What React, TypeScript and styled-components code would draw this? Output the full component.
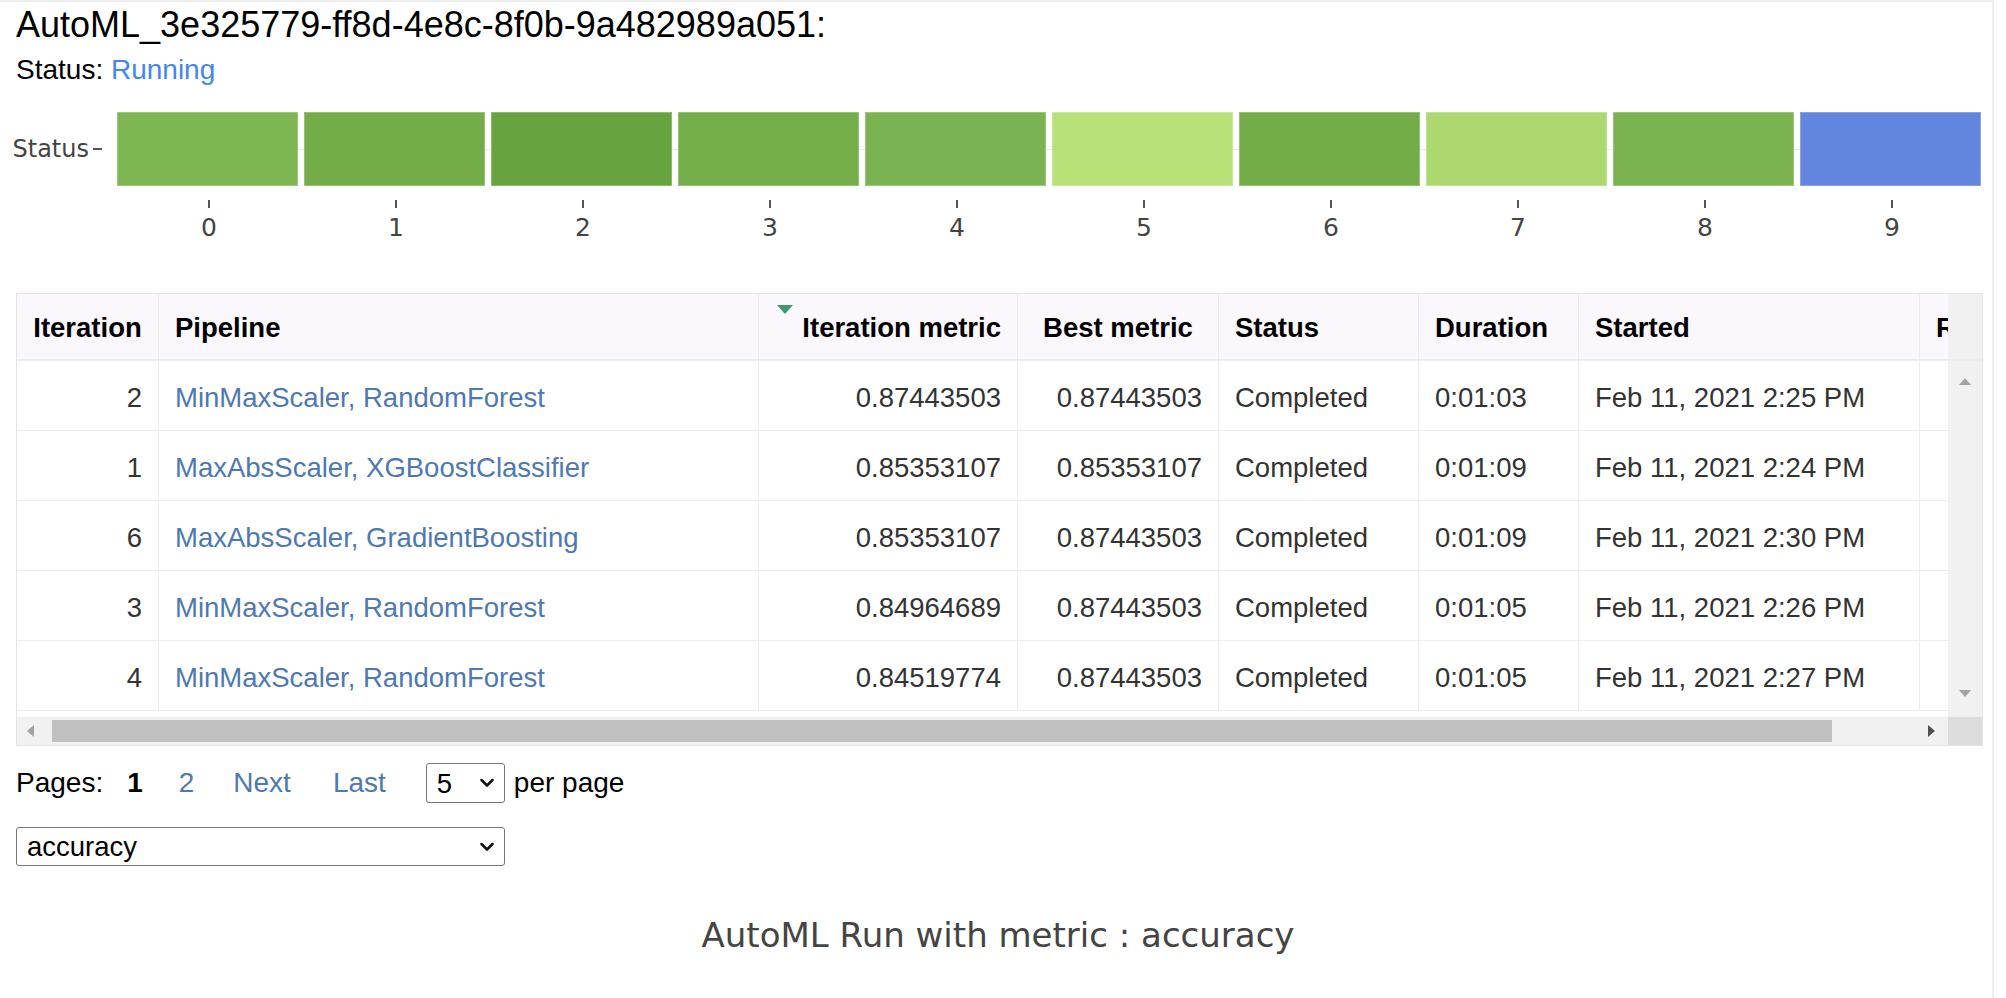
import React from "react";
import styled, { createGlobalStyle } from "styled-components";

const GlobalStyle = createGlobalStyle`
  html, body { margin: 0; padding: 0; background: #fff; }
  body { font-family: "Liberation Sans", Arial, sans-serif; color: #000; }
  * { box-sizing: border-box; }
`;

const COLS = "142px 600px 259px 201px 200px 160px 341px 220px";

const Frame = styled.div`
  width: 1994px;
  height: 998px;
  border-top: 2px solid #ededed;
  border-right: 2px solid #ededed;
  padding: 3px 0 0 16px;
  overflow: hidden;
`;

const Title = styled.div`
  font-size: 36px;
  line-height: 40px;
  height: 40px;
  white-space: nowrap;
`;

const StatusLine = styled.div`
  margin-top: 9px;
  font-size: 28px;
  line-height: 32px;
`;

const Running = styled.span`
  color: #4285f4;
`;

const Chart = styled.div`
  margin-top: 26px;
  display: grid;
  grid-template-columns: 101px 1864px;
  grid-template-rows: 74px auto;
  font-family: "DejaVu Sans", Verdana, sans-serif;
  color: #444;
`;

const YAxis = styled.div`
  display: flex;
  align-items: center;
  justify-content: flex-end;
  gap: 4px;
  padding-right: 15px;
  font-size: 24px;
  white-space: nowrap;
`;

const YTick = styled.span`
  flex-shrink: 0;
  width: 9px;
  height: 2px;
  background: #555;
`;

const Bars = styled.div`
  display: flex;
  gap: 6px;
  background: linear-gradient(#ebebeb, #ebebeb) 0 37px / 100% 1px no-repeat;
`;

const Bar = styled.div<{ $color: string }>`
  flex: 1;
  background: ${(p) => p.$color};
  box-shadow: inset 0 0 0 1px rgba(255, 255, 255, 0.25);
`;

const XAxis = styled.div`
  grid-column: 2;
  display: grid;
  grid-template-columns: repeat(10, 1fr);
  column-gap: 6px;
`;

const XTick = styled.div`
  display: flex;
  flex-direction: column;
  align-items: center;
  padding-left: 3px;
`;

const TickMark = styled.span`
  width: 2px;
  height: 8px;
  margin-top: 14px;
  background: #555;
`;

const TickLabel = styled.span`
  margin-top: 5px;
  font-size: 25px;
  line-height: 30px;
`;

const TableFrame = styled.div`
  margin-top: 50px;
  width: 1967px;
  border: 1px solid #e4e4e4;
  display: grid;
  grid-template-columns: 1931px 34px;
  grid-template-rows: 67px 356px 28px;
`;

const Viewport = styled.div`
  overflow: hidden;
`;

const HeaderRow = styled.div`
  display: grid;
  grid-template-columns: ${COLS};
  width: max-content;
  height: 67px;
  background: #faf8fc;
  border-bottom: 2px solid #ececec;
`;

const HeaderGutter = styled.div`
  background: #f1f1f1;
  border-bottom: 2px solid #ececec;
`;

type Align = "start" | "center" | "end";

const justify = (a: Align) => (a === "start" ? "flex-start" : a === "end" ? "flex-end" : "center");

const HeadCell = styled.div<{ $align: Align }>`
  display: flex;
  align-items: center;
  justify-content: ${(p) => justify(p.$align)};
  gap: 9px;
  padding: 3px 16px 0;
  border-right: 1px solid #ececec;
  font-size: 27.5px;
  font-weight: 700;
  white-space: nowrap;
  overflow: hidden;
`;

const SortMark = styled.span`
  align-self: flex-start;
  margin-top: 8px;
  width: 0;
  height: 0;
  border-left: 8px solid transparent;
  border-right: 8px solid transparent;
  border-top: 9px solid #3f9a6b;
`;

const Row = styled.div`
  display: grid;
  grid-template-columns: ${COLS};
  width: max-content;
  height: 70px;
  border-bottom: 1px solid #ececec;
`;

const Cell = styled.div<{ $align: Align; $link?: boolean }>`
  display: flex;
  align-items: center;
  justify-content: ${(p) => justify(p.$align)};
  padding: 4px 16px 0;
  border-right: 1px solid #ececec;
  font-size: 27.5px;
  color: ${(p) => (p.$link ? "#4d79b2" : "#333")};
  white-space: nowrap;
  overflow: hidden;
`;

const VScroll = styled.div`
  background: #f1f1f1;
  display: flex;
  flex-direction: column;
  justify-content: space-between;
  align-items: center;
  padding: 17px 0 20px;
`;

const ArrowUp = styled.span`
  width: 0;
  height: 0;
  border-left: 6px solid transparent;
  border-right: 6px solid transparent;
  border-bottom: 7px solid #a3a3a3;
`;

const ArrowDown = styled.span`
  width: 0;
  height: 0;
  border-left: 6px solid transparent;
  border-right: 6px solid transparent;
  border-top: 7px solid #a3a3a3;
`;

const HScroll = styled.div`
  background: #f1f1f1;
  display: flex;
  align-items: center;
  padding: 0 13px 0 10px;
`;

const ArrowLeft = styled.span`
  width: 0;
  height: 0;
  border-top: 6px solid transparent;
  border-bottom: 6px solid transparent;
  border-right: 7px solid #a3a3a3;
`;

const ArrowRight = styled.span`
  margin-left: auto;
  width: 0;
  height: 0;
  border-top: 6px solid transparent;
  border-bottom: 6px solid transparent;
  border-left: 7px solid #505050;
`;

const Thumb = styled.span`
  margin-left: 18px;
  height: 22px;
  background: #c1c1c1;
`;

const Corner = styled.div`
  background: #dcdcdc;
`;

const Pager = styled.div`
  margin-top: 17px;
  height: 40px;
  display: flex;
  align-items: center;
  font-size: 28px;
`;

const PagesLabel = styled.span`
  margin-right: 6px;
`;

const PageNumber = styled.a<{ $current?: boolean }>`
  padding: 0 18px;
  color: ${(p) => (p.$current ? "#000" : "#4d79b2")};
  font-weight: ${(p) => (p.$current ? 700 : 400)};
  text-decoration: none;
  cursor: pointer;
`;

const PageNav = styled.a`
  padding: 0 21px;
  color: #4d79b2;
  text-decoration: none;
  cursor: pointer;
`;

const SelectWrap = styled.div<{ $w: number; $h: number; $ml?: number }>`
  position: relative;
  width: ${(p) => p.$w}px;
  height: ${(p) => p.$h}px;
  margin-left: ${(p) => p.$ml ?? 0}px;
`;

const NativeSelect = styled.select`
  appearance: none;
  width: 100%;
  height: 100%;
  border: 1px solid #767676;
  border-radius: 3px;
  background: #fff;
  padding: 0 10px;
  font-family: "Liberation Sans", Arial, sans-serif;
  font-size: 27.5px;
  color: #000;
`;

const Chevron = styled.svg`
  position: absolute;
  right: 11px;
  top: 50%;
  transform: translateY(-50%);
  pointer-events: none;
`;

const PerPage = styled.span`
  margin-left: 9px;
`;

const MetricRow = styled.div`
  margin-top: 24px;
`;

const PlotTitle = styled.div`
  margin-top: 47px;
  width: 1964px;
  text-align: center;
  font-family: "DejaVu Sans", Verdana, sans-serif;
  font-size: 34px;
  line-height: 44px;
  color: #444;
`;

const barColors = [
  "#7eb651",
  "#74ad48",
  "#67a43f",
  "#73ae49",
  "#7ab452",
  "#b8e177",
  "#74ad47",
  "#add870",
  "#7ab350",
  "#6285de",
];

type Column = { key: string; label: string; head: Align; body: Align; link?: boolean; sorted?: boolean };

const columns: Column[] = [
  { key: "iter", label: "Iteration", head: "center", body: "end" },
  { key: "pipe", label: "Pipeline", head: "start", body: "start", link: true },
  { key: "metric", label: "Iteration metric", head: "end", body: "end", sorted: true },
  { key: "best", label: "Best metric", head: "center", body: "end" },
  { key: "status", label: "Status", head: "start", body: "start" },
  { key: "dur", label: "Duration", head: "start", body: "start" },
  { key: "start", label: "Started", head: "start", body: "start" },
  { key: "run", label: "Run ID", head: "start", body: "end" },
];

const rows: Record<string, string>[] = [
  { iter: "2", pipe: "MinMaxScaler, RandomForest", metric: "0.87443503", best: "0.87443503", status: "Completed", dur: "0:01:03", start: "Feb 11, 2021 2:25 PM", run: "" },
  { iter: "1", pipe: "MaxAbsScaler, XGBoostClassifier", metric: "0.85353107", best: "0.85353107", status: "Completed", dur: "0:01:09", start: "Feb 11, 2021 2:24 PM", run: "" },
  { iter: "6", pipe: "MaxAbsScaler, GradientBoosting", metric: "0.85353107", best: "0.87443503", status: "Completed", dur: "0:01:09", start: "Feb 11, 2021 2:30 PM", run: "" },
  { iter: "3", pipe: "MinMaxScaler, RandomForest", metric: "0.84964689", best: "0.87443503", status: "Completed", dur: "0:01:05", start: "Feb 11, 2021 2:26 PM", run: "" },
  { iter: "4", pipe: "MinMaxScaler, RandomForest", metric: "0.84519774", best: "0.87443503", status: "Completed", dur: "0:01:05", start: "Feb 11, 2021 2:27 PM", run: "" },
];

const ChevronIcon = () => (
  <Chevron width="14" height="9" viewBox="0 0 14 9">
    <path d="M1.5 1.5 L7 7 L12.5 1.5" fill="none" stroke="#111" strokeWidth="2.6" strokeLinecap="round" strokeLinejoin="round" />
  </Chevron>
);

export default function App() {
  return (
    <>
      <GlobalStyle />
      <Frame>
        <Title>AutoML_3e325779-ff8d-4e8c-8f0b-9a482989a051:</Title>
        <StatusLine>
          Status: <Running>Running</Running>
        </StatusLine>

        <Chart>
          <YAxis>
            <span>Status</span>
            <YTick />
          </YAxis>
          <Bars>
            {barColors.map((c, i) => (
              <Bar key={i} $color={c} />
            ))}
          </Bars>
          <XAxis>
            {barColors.map((_, i) => (
              <XTick key={i}>
                <TickMark />
                <TickLabel>{i}</TickLabel>
              </XTick>
            ))}
          </XAxis>
        </Chart>

        <TableFrame>
          <Viewport>
            <HeaderRow>
              {columns.map((c) => (
                <HeadCell key={c.key} $align={c.head}>
                  {c.sorted && <SortMark />}
                  {c.label}
                </HeadCell>
              ))}
            </HeaderRow>
          </Viewport>
          <HeaderGutter />
          <Viewport>
            {rows.map((r, i) => (
              <Row key={i}>
                {columns.map((c) => (
                  <Cell key={c.key} $align={c.body} $link={c.link}>
                    {r[c.key]}
                  </Cell>
                ))}
              </Row>
            ))}
          </Viewport>
          <VScroll>
            <ArrowUp />
            <ArrowDown />
          </VScroll>
          <HScroll>
            <ArrowLeft />
            <Thumb style={{ width: `${Math.round(1931 * 0.922)}px` }} />
            <ArrowRight />
          </HScroll>
          <Corner />
        </TableFrame>

        <Pager>
          <PagesLabel>Pages:</PagesLabel>
          <PageNumber $current>1</PageNumber>
          <PageNumber>2</PageNumber>
          <PageNav>Next</PageNav>
          <PageNav>Last</PageNav>
          <SelectWrap $w={79} $h={40} $ml={19}>
            <NativeSelect defaultValue="5">
              <option value="5">5</option>
              <option value="10">10</option>
              <option value="20">20</option>
            </NativeSelect>
            <ChevronIcon />
          </SelectWrap>
          <PerPage>per page</PerPage>
        </Pager>

        <MetricRow>
          <SelectWrap $w={489} $h={39}>
            <NativeSelect defaultValue="accuracy">
              <option value="accuracy">accuracy</option>
              <option value="precision">precision</option>
              <option value="recall">recall</option>
              <option value="f1">f1</option>
            </NativeSelect>
            <ChevronIcon />
          </SelectWrap>
        </MetricRow>

        <PlotTitle>AutoML Run with metric : accuracy</PlotTitle>
      </Frame>
    </>
  );
}
